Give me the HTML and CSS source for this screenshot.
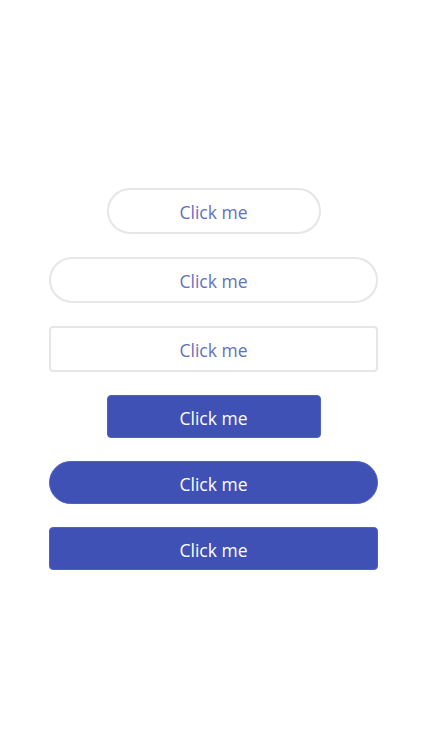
FILE: index.html
```html
<!DOCTYPE html>
<html>
<head>
<meta charset="utf-8">
<link rel="stylesheet" href="styles.css">
</head>
<body>
<main class="stack">
  <button class="btn outline pill narrow">Click me</button>
  <button class="btn outline pill wide">Click me</button>
  <button class="btn outline rect wide">Click me</button>
  <button class="btn filled rect narrow">Click me</button>
  <button class="btn filled pill wide">Click me</button>
  <button class="btn filled rect wide">Click me</button>
</main>
</body>
</html>
```
FILE: styles.css
```css
html, body {
  margin: 0;
  padding: 0;
  background: #ffffff;
}
.stack {
  height: 756px;
  box-sizing: border-box;
  padding-top: 2px;
  display: flex;
  flex-direction: column;
  align-items: center;
  justify-content: center;
  gap: 23px;
}
.btn {
  font-family: "Open Sans", "Noto Sans", sans-serif;
  font-size: 17.5px;
  margin: 0;
  padding: 1px 0 0 0;
  cursor: pointer;
  box-sizing: border-box;
}
.narrow { width: 214px; }
.wide { width: 329px; }
.outline {
  height: 46px;
  background: #ffffff;
  border: 2px solid #e6e6e6;
  color: #6270c2;
}
.filled {
  height: 43px;
  padding-top: 2px;
  background: #3f51b5;
  border: 1px solid #5060c0;
  color: #ffffff;
}
.pill { border-radius: 23px; }
.rect { border-radius: 4px; }
```
